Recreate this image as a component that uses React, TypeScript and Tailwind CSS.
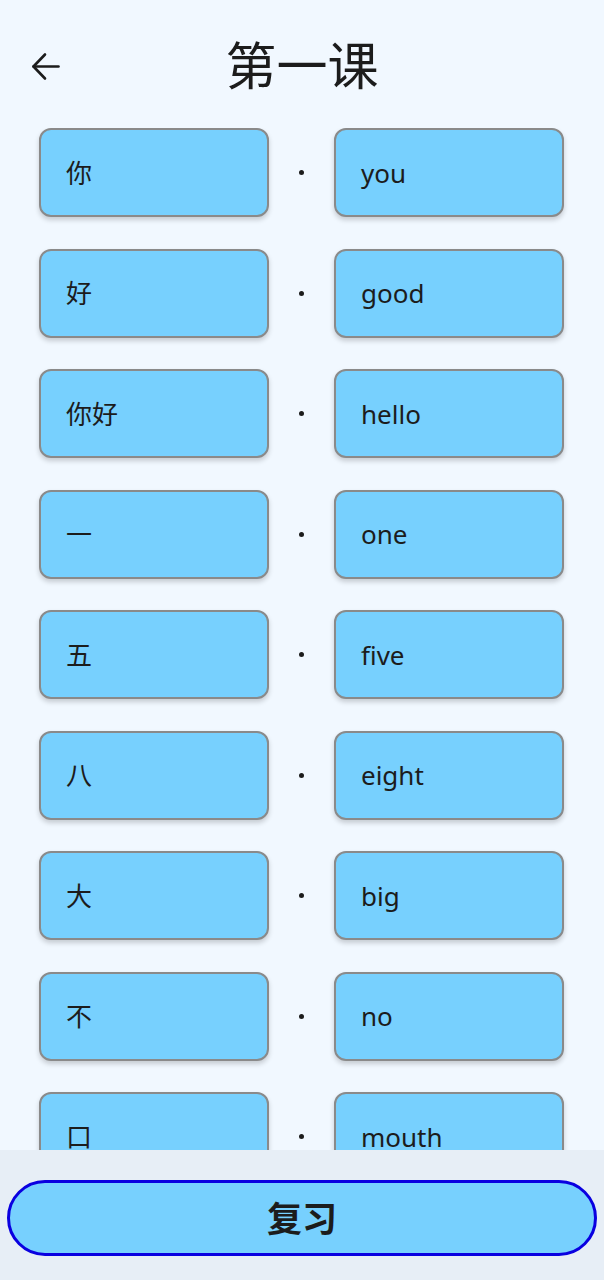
import React from 'react';

const words: [string, string][] = [
  ['你', 'you'],
  ['好', 'good'],
  ['你好', 'hello'],
  ['一', 'one'],
  ['五', 'five'],
  ['八', 'eight'],
  ['大', 'big'],
  ['不', 'no'],
  ['口', 'mouth'],
];

const font = { fontFamily: '"Noto Sans", "Noto Sans CJK SC", sans-serif' };

const WordCard = ({ text }: { text: string }) => (
  <div className="w-[230px] h-[89px] shrink-0 rounded-[12px] border-2 border-[#8a8a8a] bg-[#77d0fe] shadow-[0_3px_5px_rgba(0,0,0,0.18)] flex items-center pl-[25px]">
    <span className="text-[26px] text-[#1c1c1c] leading-none">{text}</span>
  </div>
);

export default function App() {
  return (
    <div className="w-[604px] h-[1280px] bg-[#f1f8ff] flex flex-col overflow-hidden" style={font}>
      {/* header */}
      <div className="h-[128px] shrink-0 relative flex items-start justify-center pt-[35px]">
        <button className="absolute left-[31px] top-[52px] w-[30px] h-[30px]">
          <svg width="30" height="30" viewBox="0 0 30 30" fill="none" stroke="#1c1c1c" strokeWidth="2.6" strokeLinecap="round" strokeLinejoin="round">
            <path d="M2.5 14.5 H27.5" />
            <path d="M14 2.5 L2.5 14.5 L14 26.5" />
          </svg>
        </button>
        <h1 className="text-[51px] leading-[60px] text-[#1c1c1c] font-normal">第一课</h1>
      </div>

      {/* list */}
      <div className="flex-1 overflow-hidden">
        <div className="flex flex-col gap-[31.5px] pl-[39px] pr-[40px]">
          {words.map(([zh, en]) => (
            <div key={zh} className="flex items-center justify-between">
              <WordCard text={zh} />
              <div className="w-[5px] h-[5px] rounded-full bg-[#1c1c1c]" />
              <WordCard text={en} />
            </div>
          ))}
        </div>
      </div>

      {/* bottom */}
      <div className="h-[130px] shrink-0 bg-[#e7eef6] px-[7px] pt-[30px]">
        <button className="w-full h-[76px] rounded-full border-[3px] border-[#0a00e0] bg-[#77d0fe] flex items-center justify-center">
          <span className="text-[35px] font-bold text-[#1c1c1c] leading-none">复习</span>
        </button>
      </div>
    </div>
  );
}
